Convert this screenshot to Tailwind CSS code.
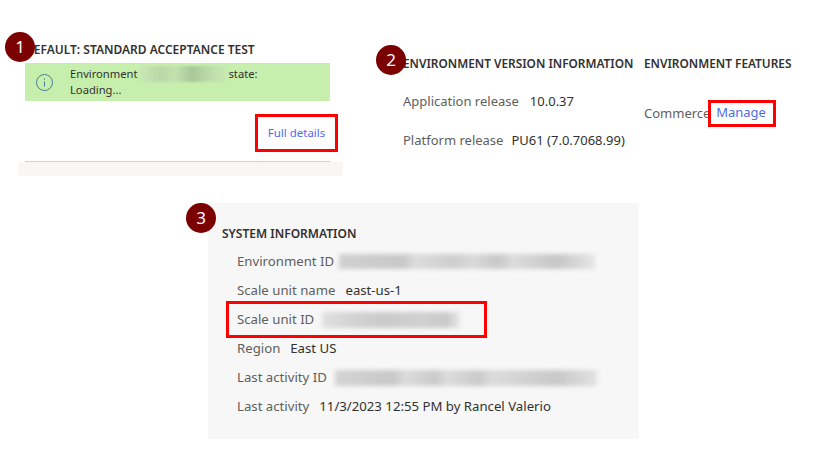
<!DOCTYPE html>
<html lang="en">
  <head>
    <meta charset="UTF-8" />
    <title>Environment details</title>
    <script src="https://cdn.jsdelivr.net/npm/@tailwindcss/browser@4"></script>
  </head>
  <body class="bg-white font-['Noto_Sans',sans-serif] text-[#323130]">
    <div class="relative w-[832px] h-[457px] overflow-hidden">
      <!-- top row -->
      <div class="flex h-[203px]">
        <section class="relative w-[325px] h-[176px] ml-[18px] pt-[42px]">
          <span class="absolute -left-[13px] top-[32px] z-10 flex h-[30px] w-[30px] items-center justify-center rounded-full bg-[#7b0000] text-[17px] text-white">1</span>
          <h2 class="pl-[7px] text-[12px] leading-[16px] font-semibold whitespace-nowrap">DEFAULT: STANDARD ACCEPTANCE TEST</h2>
          <div class="ml-[7px] mt-[5px] flex h-[38px] w-[305px] items-center bg-[#c6efad] pl-[11px]">
            <svg width="17" height="17" viewBox="0 0 17 17" fill="none" class="shrink-0">
              <circle cx="8.5" cy="8.5" r="8" stroke="#4a76a8" />
              <path d="M8.5 7.5v5M8.5 4.6v1.3" stroke="#4a76a8" />
            </svg>
            <div class="ml-[17px] w-[200px] text-[11.2px] leading-[16px]">
              <div class="flex">
                <span>Environment</span>
                <span class="mx-[2px] h-[16px] w-[87px] bg-[linear-gradient(90deg,#c8e8b4,#b9d8a6_25%,#c2e2ae_40%,#a8c89a_60%,#bcdca8_80%,#c8e8b4)] blur-[1px]"></span>
                <span>state:</span>
              </div>
              <div>Loading...</div>
            </div>
          </div>
          <div class="ml-[237px] mt-[13px] flex h-[38px] w-[83px] items-center justify-center border-[3px] border-[#fe0000]">
            <a class="text-[11.5px] text-[#4f6bed]">Full details</a>
          </div>
          <div class="ml-[7px] mt-[9px] h-px w-[305px] bg-[#d2d0ce]"></div>
          <div class="h-[14px] bg-[#f8f7f6]"></div>
        </section>

        <section class="relative ml-[60px] w-[241px] pt-[55px]">
          <span class="absolute -left-[27px] top-[45px] z-10 flex h-[30px] w-[30px] items-center justify-center rounded-full bg-[#7b0000] text-[17px] text-white">2</span>
          <h2 class="text-[11.85px] leading-[16px] font-semibold whitespace-nowrap">ENVIRONMENT VERSION INFORMATION</h2>
          <div class="mt-[22px] flex h-[18px] items-center gap-[11px] text-[13px]">
            <span class="text-[#605e5c]">Application release</span><span>10.0.37</span>
          </div>
          <div class="mt-[21px] flex h-[18px] items-center gap-[8px] text-[13px]">
            <span class="text-[#605e5c]">Platform release</span><span>PU61 (7.0.7068.99)</span>
          </div>
        </section>

        <section class="relative w-[160px] pt-[55px]">
          <h2 class="text-[11.85px] leading-[16px] font-semibold whitespace-nowrap">ENVIRONMENT FEATURES</h2>
          <div class="mt-[34px] flex h-[18px] items-center text-[13px] text-[#605e5c]">Commerce</div>
          <div class="absolute left-[64px] top-[100px] flex h-[27px] w-[68px] items-center justify-center border-[3px] border-[#fe0000] pr-[2px] pb-[2px] text-[13px] text-[#4f6bed]">Manage</div>
        </section>
      </div>

      <!-- system information -->
      <section class="relative ml-[208px] h-[236px] w-[431px] bg-[#f7f7f7] pl-[14px] pt-[23px]">
        <span class="absolute -left-[22px] -top-[0px] z-10 flex h-[30px] w-[30px] items-center justify-center rounded-full bg-[#7b0000] text-[17px] text-white">3</span>
        <h2 class="text-[12px] leading-[16px] font-semibold whitespace-nowrap">SYSTEM INFORMATION</h2>
        <div class="mt-[5px] flex flex-col pl-[15px] text-[13.2px]">
          <div class="flex h-[29px] items-center gap-[5px]">
            <span class="text-[#605e5c]">Environment ID</span>
            <span class="h-[15px] w-[256px] bg-[linear-gradient(90deg,#d0d0d0,#c8c8c8_25%,#dcdcdc_30%,#cdcdcd_45%,#dadada_52%,#c8c8c8_62%,#dcdcdc_68%,#c6c6c6_85%,#e6e6e6)] blur-[2px]"></span>
          </div>
          <div class="flex h-[29px] items-center gap-[10px]">
            <span class="text-[#605e5c]">Scale unit name</span><span>east-us-1</span>
          </div>
          <div class="flex h-[29px] items-center gap-[8px]">
            <span class="text-[#605e5c]">Scale unit ID</span>
            <span class="h-[16px] w-[138px] bg-[linear-gradient(90deg,#e0e0e0,#d4d4d4_20%,#cacaca_45%,#d0d0d0_70%,#cacaca_90%,#e6e6e6)] blur-[2px]"></span>
          </div>
          <div class="flex h-[29px] items-center gap-[10px]">
            <span class="text-[#605e5c]">Region</span><span>East US</span>
          </div>
          <div class="flex h-[29px] items-center gap-[8px]">
            <span class="text-[#605e5c]">Last activity ID</span>
            <span class="h-[16px] w-[262px] bg-[linear-gradient(90deg,#d4d4d4,#c8c8c8_22%,#dcdcdc_27%,#cacaca_38%,#dcdcdc_43%,#cacaca_55%,#dcdcdc_60%,#c8c8c8_85%,#e2e2e2)] blur-[2px]"></span>
          </div>
          <div class="flex h-[29px] items-center gap-[10px]">
            <span class="text-[#605e5c]">Last activity</span><span>11/3/2023 12:55 PM by Rancel Valerio</span>
          </div>
        </div>
        <div class="absolute left-[18px] top-[98px] h-[37px] w-[261px] border-[3px] border-[#fe0000]"></div>
      </section>
    </div>
  </body>
</html>
